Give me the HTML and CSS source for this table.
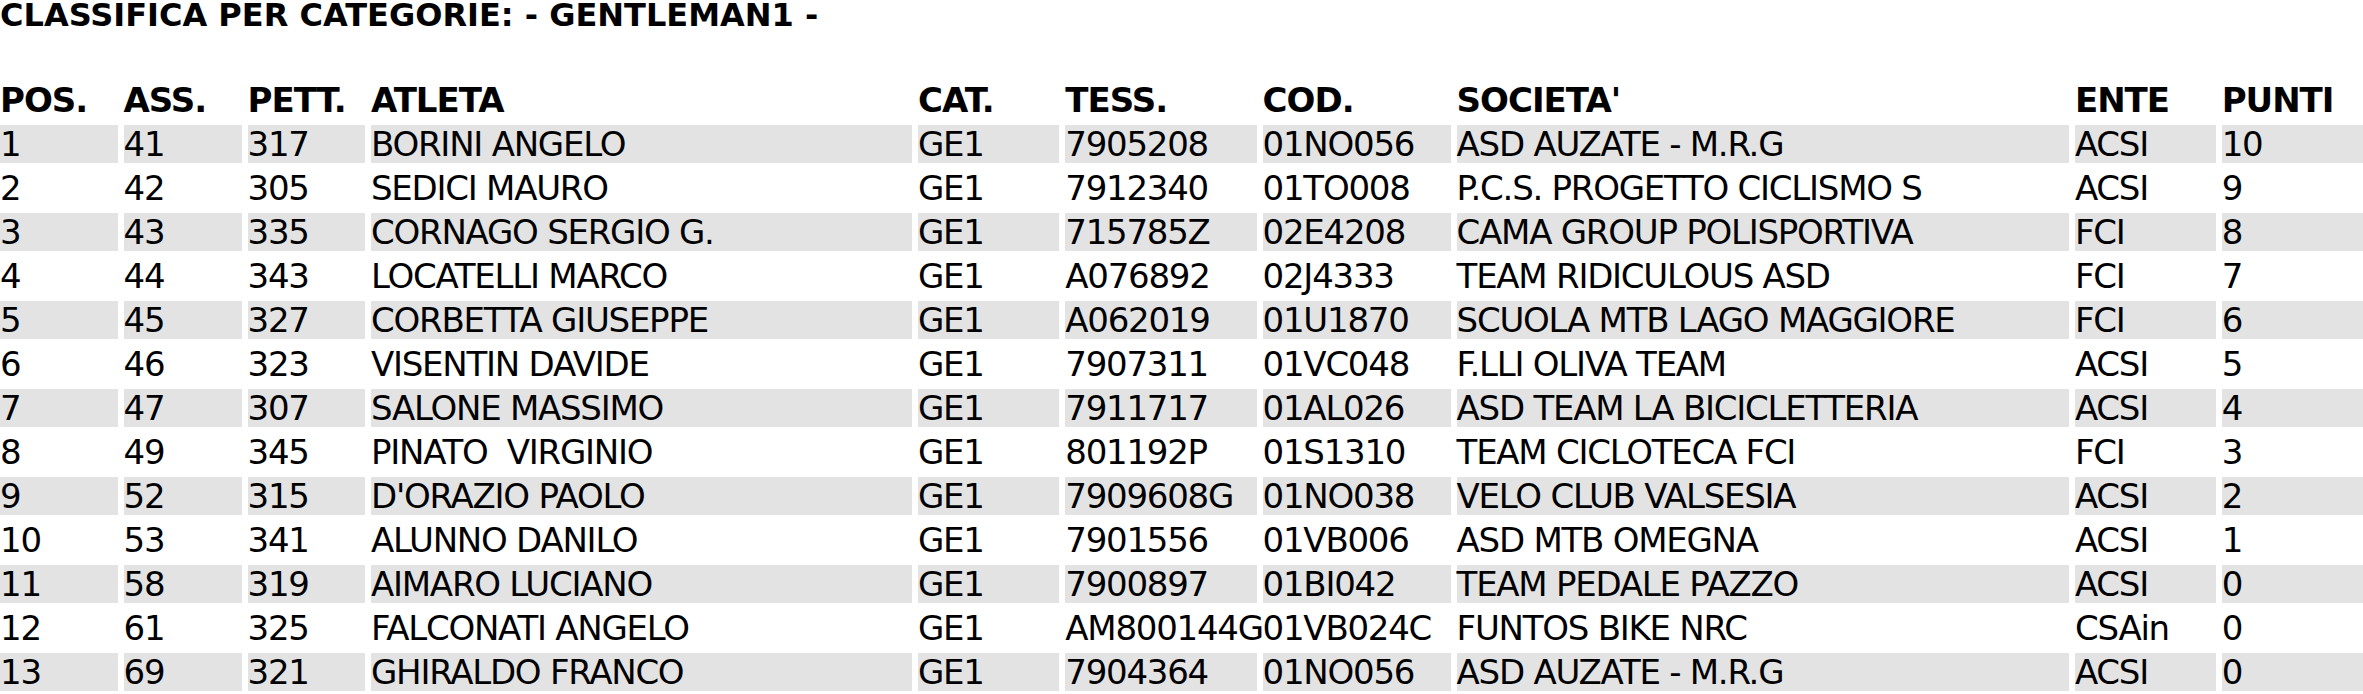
FILE: index.html
```html
<!DOCTYPE html>
<html>
<head>
<meta charset="utf-8">
<link rel="stylesheet" href="styles.css">
</head>
<body>
<h1 class="title">CLASSIFICA PER CATEGORIE: - GENTLEMAN1 -</h1>
<div class="table-wrap">
<table class="ranking">
<colgroup>
<col class="c-pos"><col class="c-ass"><col class="c-pett"><col class="c-atleta"><col class="c-cat"><col class="c-tess"><col class="c-cod"><col class="c-soc"><col class="c-ente"><col class="c-punti">
</colgroup>
<thead>
<tr><th>POS.</th><th>ASS.</th><th>PETT.</th><th>ATLETA</th><th>CAT.</th><th>TESS.</th><th>COD.</th><th>SOCIETA'</th><th>ENTE</th><th>PUNTI</th></tr>
</thead>
<tbody>
<tr><td>1</td><td>41</td><td>317</td><td>BORINI ANGELO</td><td>GE1</td><td>7905208</td><td>01NO056</td><td>ASD AUZATE - M.R.G</td><td>ACSI</td><td>10</td></tr>
<tr><td>2</td><td>42</td><td>305</td><td>SEDICI MAURO</td><td>GE1</td><td>7912340</td><td>01TO008</td><td>P.C.S. PROGETTO CICLISMO S</td><td>ACSI</td><td>9</td></tr>
<tr><td>3</td><td>43</td><td>335</td><td>CORNAGO SERGIO G.</td><td>GE1</td><td>715785Z</td><td>02E4208</td><td>CAMA GROUP POLISPORTIVA</td><td>FCI</td><td>8</td></tr>
<tr><td>4</td><td>44</td><td>343</td><td>LOCATELLI MARCO</td><td>GE1</td><td>A076892</td><td>02J4333</td><td>TEAM RIDICULOUS ASD</td><td>FCI</td><td>7</td></tr>
<tr><td>5</td><td>45</td><td>327</td><td>CORBETTA GIUSEPPE</td><td>GE1</td><td>A062019</td><td>01U1870</td><td>SCUOLA MTB LAGO MAGGIORE</td><td>FCI</td><td>6</td></tr>
<tr><td>6</td><td>46</td><td>323</td><td>VISENTIN DAVIDE</td><td>GE1</td><td>7907311</td><td>01VC048</td><td>F.LLI OLIVA TEAM</td><td>ACSI</td><td>5</td></tr>
<tr><td>7</td><td>47</td><td>307</td><td>SALONE MASSIMO</td><td>GE1</td><td>7911717</td><td>01AL026</td><td>ASD TEAM LA BICICLETTERIA</td><td>ACSI</td><td>4</td></tr>
<tr><td>8</td><td>49</td><td>345</td><td>PINATO&nbsp; VIRGINIO</td><td>GE1</td><td>801192P</td><td>01S1310</td><td>TEAM CICLOTECA FCI</td><td>FCI</td><td>3</td></tr>
<tr><td>9</td><td>52</td><td>315</td><td>D'ORAZIO PAOLO</td><td>GE1</td><td>7909608G</td><td>01NO038</td><td>VELO CLUB VALSESIA</td><td>ACSI</td><td>2</td></tr>
<tr><td>10</td><td>53</td><td>341</td><td>ALUNNO DANILO</td><td>GE1</td><td>7901556</td><td>01VB006</td><td>ASD MTB OMEGNA</td><td>ACSI</td><td>1</td></tr>
<tr><td>11</td><td>58</td><td>319</td><td>AIMARO LUCIANO</td><td>GE1</td><td>7900897</td><td>01BI042</td><td>TEAM PEDALE PAZZO</td><td>ACSI</td><td>0</td></tr>
<tr><td>12</td><td>61</td><td>325</td><td>FALCONATI ANGELO</td><td>GE1</td><td>AM800144G</td><td>01VB024C</td><td>FUNTOS BIKE NRC</td><td>CSAin</td><td>0</td></tr>
<tr><td>13</td><td>69</td><td>321</td><td>GHIRALDO FRANCO</td><td>GE1</td><td>7904364</td><td>01NO056</td><td>ASD AUZATE - M.R.G</td><td>ACSI</td><td>0</td></tr>
</tbody>
</table>
</div>
</body>
</html>
```
FILE: styles.css
```css
html, body {
  margin: 0;
  padding: 0;
  background: #ffffff;
  color: #000000;
  font-family: "DejaVu Sans", Verdana, sans-serif;
  overflow: hidden;
}

.title {
  margin: 0;
  height: 75px;
  font-size: 32px;
  line-height: 30px;
  font-weight: bold;
  white-space: nowrap;
}

.table-wrap {
  overflow: hidden;
}

.ranking {
  margin: 0 0 0 -6px;
  border-collapse: separate;
  border-spacing: 6px 6.2px;
  table-layout: fixed;
  width: 2375px;
}

.c-pos { width: 117.5px; }
.c-ass { width: 118px; }
.c-pett { width: 117.5px; }
.c-atleta { width: 541px; }
.c-cat { width: 141.3px; }
.c-tess { width: 191.3px; }
.c-cod { width: 188px; }
.c-soc { width: 612.3px; }
.c-ente { width: 140.7px; }
.c-punti { width: 141.3px; }

.ranking th,
.ranking td {
  padding: 0;
  height: 38px;
  line-height: 38px;
  font-size: 34px;
  letter-spacing: -1.25px;
  text-align: left;
  white-space: nowrap;
  overflow: visible;
  vertical-align: middle;
}

.ranking th {
  font-weight: bold;
  letter-spacing: -1px;
}

.ranking tbody tr:nth-child(odd) td {
  background: #e3e3e3;
}
```
